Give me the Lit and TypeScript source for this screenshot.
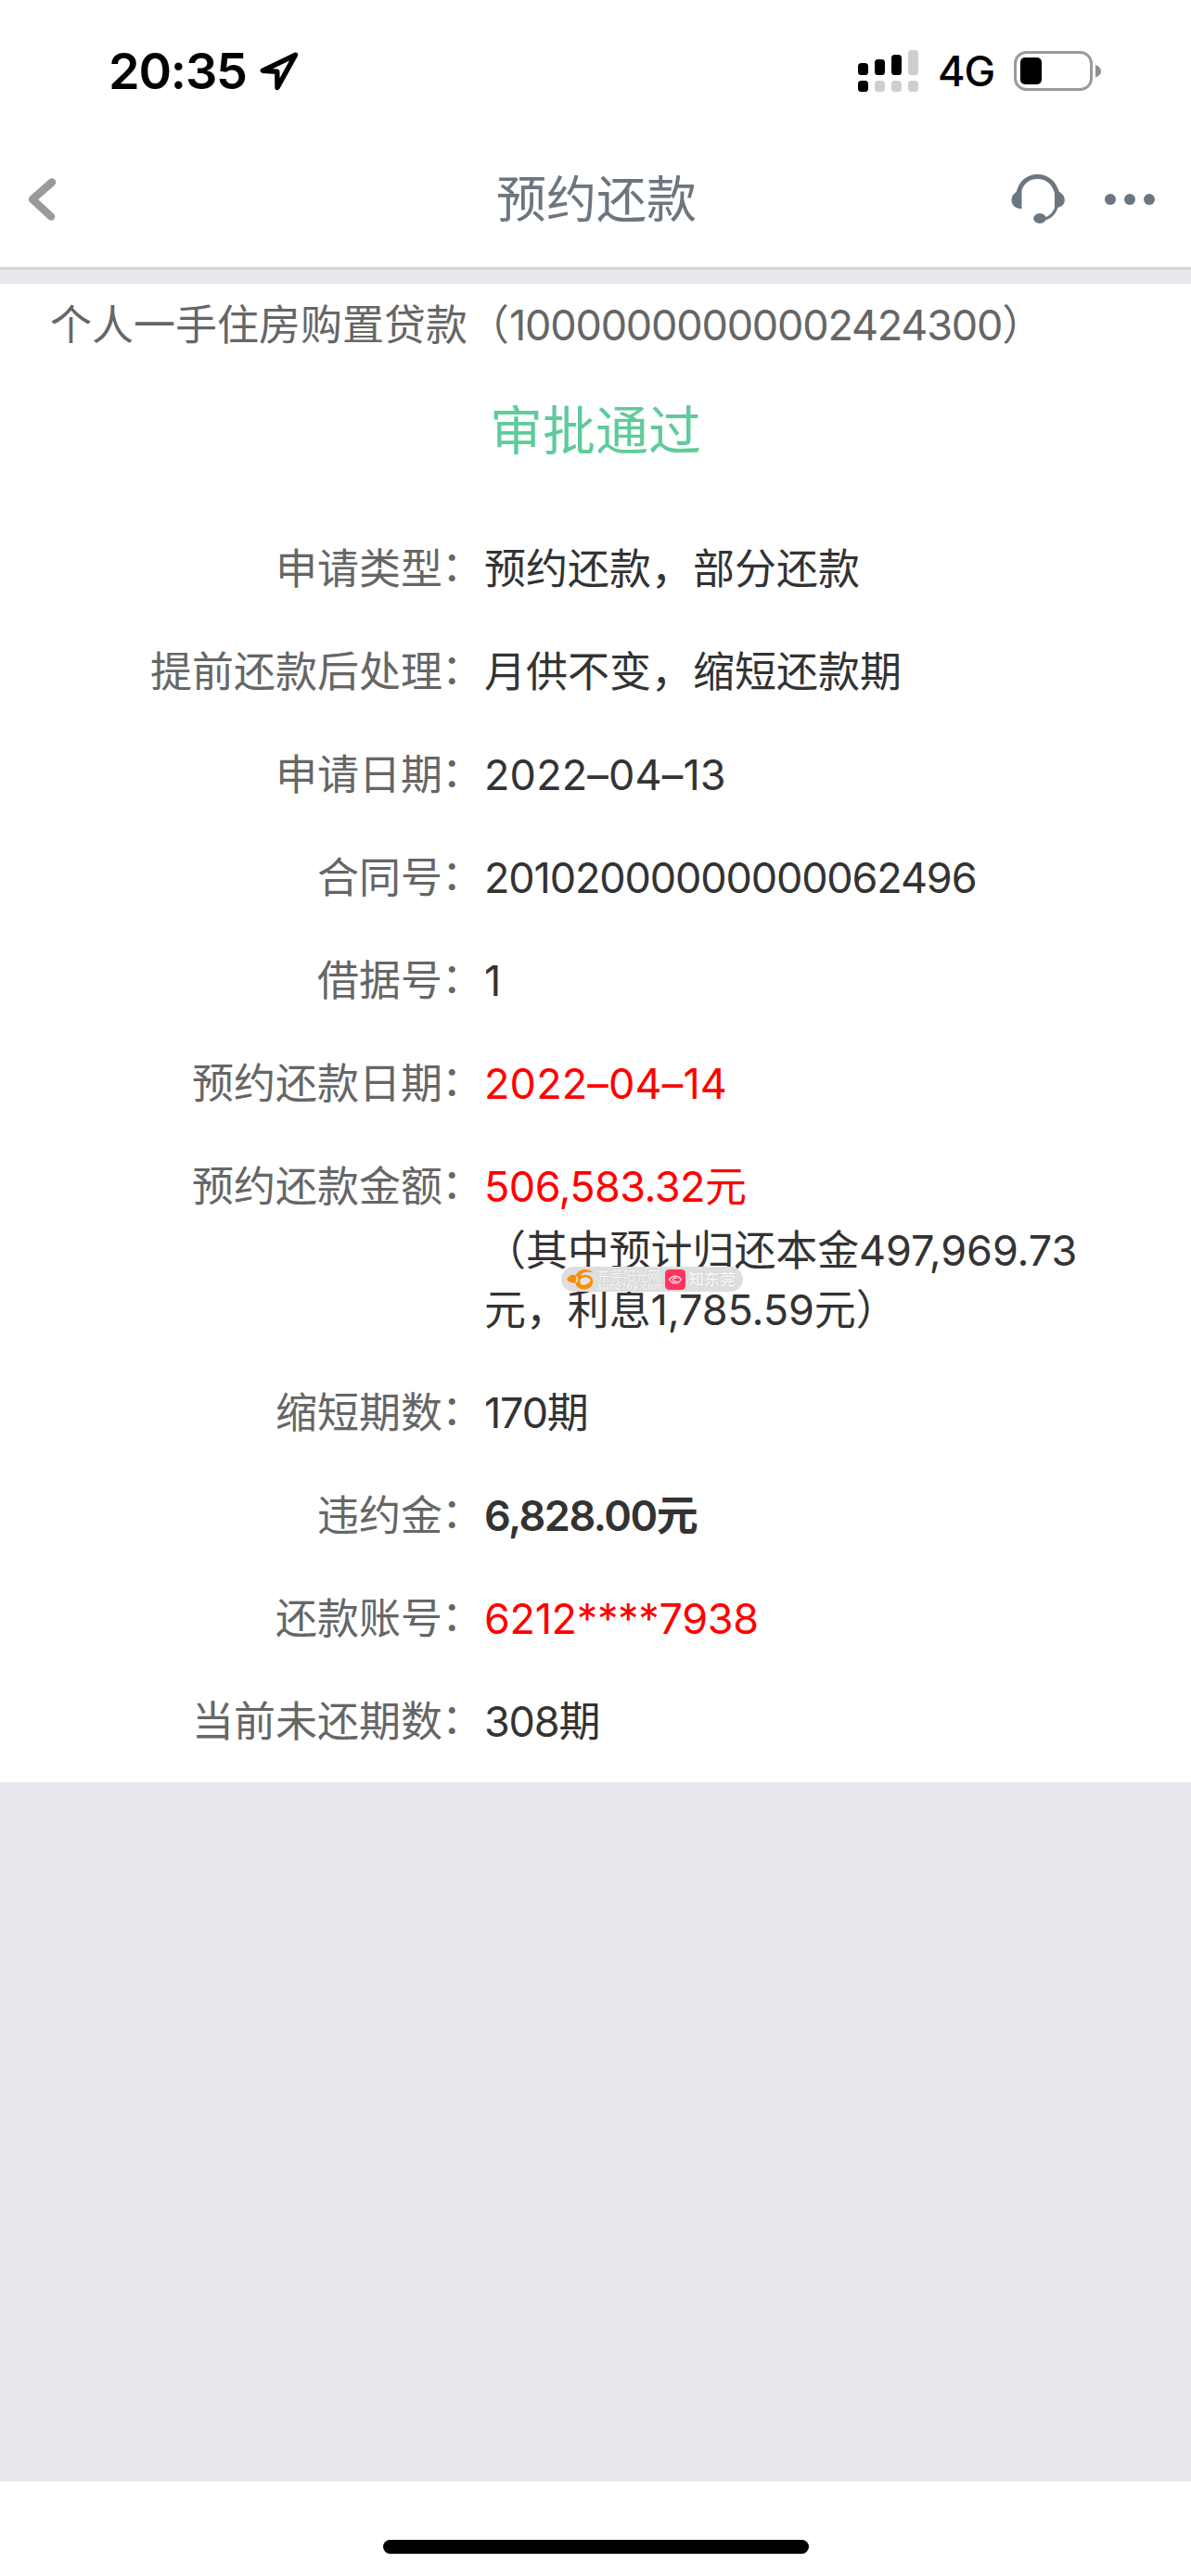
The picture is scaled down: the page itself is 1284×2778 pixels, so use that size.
import { LitElement, html, css, svg } from "lit";
import { customElement, property } from "lit/decorators.js";
import { styleMap } from "lit/directives/style-map.js";

interface Row {
  label: string;
  value: string;
  tracking?: number;
  tone?: "red" | "bold";
  note?: string[];
}

const ROWS: Row[] = [
  { label: "申请类型", value: "预约还款，部分还款" },
  { label: "提前还款后处理", value: "月供不变，缩短还款期" },
  { label: "申请日期", value: "2022–04–13", tracking: 0.15 },
  { label: "合同号", value: "20102000000000062496", tracking: -1.15 },
  { label: "借据号", value: "1" },
  { label: "预约还款日期", value: "2022–04–14", tone: "red", tracking: 0.15 },
  {
    label: "预约还款金额",
    value: "506,583.32元",
    tone: "red",
    tracking: -0.55,
    note: ["（其中预计归还本金497,969.73", "元，利息1,785.59元）"],
  },
  { label: "缩短期数", value: "170期", tracking: -1.2 },
  { label: "违约金", value: "6,828.00元", tone: "bold", tracking: -1.5 },
  { label: "还款账号", value: "6212****7938", tone: "red", tracking: -0.35 },
  { label: "当前未还期数", value: "308期", tracking: -1.2 },
];

@customElement("status-bar")
class StatusBar extends LitElement {
  static styles = css`
    :host {
      display: flex;
      justify-content: space-between;
      align-items: center;
      height: 153px;
      box-sizing: border-box;
      padding: 0 97px 0 117px;
      margin-bottom: 1px;
      color: #000;
    }
    .left,
    .right {
      display: flex;
      align-items: center;
    }
    .time {
      font-size: 54px;
      font-weight: 600;
      line-height: 60px;
      width: 163px;
      white-space: nowrap;
      letter-spacing: -1.2px;
    }
    .net {
      font-size: 45px;
      font-weight: 500;
      line-height: 60px;
      width: 82px;
      padding-left: 21px;
      white-space: nowrap;
      letter-spacing: -1px;
    }
    svg {
      display: block;
      flex: none;
    }
  `;
  render() {
    const bars = [
      [0, 14, 13, true],
      [18, 10, 17, true],
      [36, 5, 22, true],
      [54, 0, 27, false],
    ] as const;
    return html`
      <div class="left">
        <span class="time">20:35</span>
        <svg width="42" height="42" viewBox="0 0 42 42">
          <path d="M38.500 3.200 3.300 20.200 18.800 21.200 19 38.500Z" fill="none" stroke="#000" stroke-width="5.400" stroke-linejoin="round" />
        </svg>
      </div>
      <div class="right">
        <svg width="65" height="45" viewBox="0 0 65 45">
          ${bars.map(
            ([x, y, h, on]) => svg`<rect x=${x} y=${y} width="11" height=${h} rx="3.5" fill=${on ? "#000" : "#cdcfcf"} />
              <rect x=${x} y="33" width="11" height="12" rx="3.5" fill=${x === 0 ? "#000" : "#cdcfcf"} />`
          )}
        </svg>
        <span class="net">4G</span>
        <svg width="94" height="43" viewBox="0 0 94 43">
          <rect x="1.5" y="1.5" width="82" height="40" rx="12" fill="none" stroke="#999b9b" stroke-width="3" />
          <rect x="7" y="7" width="23" height="29" rx="5" fill="#000" />
          <path d="M88 15c4 1.200 6 3.600 6 6.700s-2 5.500-6 6.700Z" fill="#8e9090" />
        </svg>
      </div>
    `;
  }
}

@customElement("nav-bar")
class NavBar extends LitElement {
  @property() heading = "";
  static styles = css`
    :host {
      display: grid;
      grid-template-columns: 1fr auto 1fr;
      align-items: center;
      height: 137px;
      padding: 0 39px 13px 30px;
      box-sizing: border-box;
      border-bottom: 3px solid #d2d6d7;
      color: #6b7680;
    }
    .title {
      font-size: 54px;
      line-height: 70px;
      padding-left: 11px;
      padding-top: 2px;
    }
    .actions {
      display: flex;
      justify-content: flex-end;
      align-items: center;
      gap: 43px;
    }
    svg {
      display: block;
    }
  `;
  render() {
    return html`
      <svg width="31" height="46" viewBox="0 0 31 46">
        <path d="M26 4.500 5 23 25 41.500" fill="none" stroke="#999b9b" stroke-width="8.500" stroke-linecap="round" stroke-linejoin="round" />
      </svg>
      <div class="title">${this.heading}</div>
      <div class="actions">
        <svg width="58" height="54" viewBox="0 0 58 54" fill="currentColor">
          <path d="M8 20C11 8 19 2.500 28.500 2.500S46 8 49.500 20" fill="none" stroke="currentColor" stroke-width="5" />
          <path d="M11.500 17.500V37H9C3.500 36 .5 32.500 .5 28S3 20.500 6.500 18.500Z" />
          <path d="M47 17.500V37C54 35.500 57.800 32.500 57.800 28S55 20.500 51.500 18.500Z" />
          <path d="M49.500 34C47.500 41 43 46 37 48" fill="none" stroke="currentColor" stroke-width="3.200" />
          <ellipse cx="31" cy="47.500" rx="6.800" ry="5.400" />
        </svg>
        <svg width="54" height="12" viewBox="0 0 54 12" fill="currentColor">
          <circle cx="6" cy="6" r="6" />
          <circle cx="27" cy="6" r="6" />
          <circle cx="48" cy="6" r="6" />
        </svg>
      </div>
    `;
  }
}

@customElement("source-badge")
class SourceBadge extends LitElement {
  static styles = css`
    :host {
      display: flex;
      align-items: center;
      width: 196px;
      height: 27px;
      box-sizing: border-box;
      padding-left: 6px;
      border-radius: 14px;
      background: #dedede;
      color: #f8f8f8;
      overflow: hidden;
    }
    svg {
      display: block;
      flex: none;
    }
    .site {
      width: 76px;
      padding-left: 3px;
      box-sizing: border-box;
    }
    .name {
      font-size: 13.600px;
      line-height: 16px;
      white-space: nowrap;
      text-shadow: 0 0 1px #bbb;
    }
    .domain {
      font-size: 9.500px;
      line-height: 8px;
      font-weight: 600;
      letter-spacing: 0.600px;
      text-shadow: 0 0 1px #bbb;
    }
    .app {
      padding-left: 3px;
      font-size: 17px;
      line-height: 20px;
      font-weight: 500;
      white-space: nowrap;
      text-shadow: 0 0 1px #bbb;
    }
  `;
  render() {
    return html`
      <svg width="30" height="23" viewBox="0 0 30 23">
        <path
          d="M0 11.500C3 7 7 6 10 7.500C12 1 21-1.500 29 4.500C22 3 16 4 15 8.500C18 6 25 6.500 27.500 10.500C30 16 26 22.500 19 22.500C13 22.500 9.500 19 9.500 15.500C5 16 1.500 14.500 0 11.500Z"
          fill="#f78f0c"
        />
        <path d="M15 11.500C18 8 23.500 9 25.500 13C24 17 17 19.500 15 16.500C14 15 14 13 15 11.500Z" fill="#e6e4e0" />
        <path d="M10.500 8.500C12 11 11 13.500 10 15" fill="none" stroke="#fff" stroke-width="1.200" />
      </svg>
      <div class="site">
        <div class="name">东莞阳光网</div>
        <div class="domain">sun0769.com</div>
      </div>
      <svg width="22" height="22" viewBox="0 0 22 22">
        <rect width="22" height="22" rx="4.500" fill="#ff3560" />
        <path d="M4.500 11Q11 3 17.500 11Q11 19 4.500 11Z" fill="none" stroke="#fff" stroke-width="1.100" />
        <path d="M12.600 9.600a2.200 2.200 0 1 0 0 2.800" fill="none" stroke="#fff" stroke-width="1.200" />
      </svg>
      <div class="app">知东莞</div>
    `;
  }
}

@customElement("detail-row")
class DetailRow extends LitElement {
  @property({ attribute: false }) row!: Row;
  static styles = css`
    :host {
      display: grid;
      grid-template-columns: 522px 1fr;
      padding: 23px 0 24px;
      font-size: 45px;
      line-height: 64px;
      color: #333;
    }
    .label {
      display: flex;
      justify-content: flex-end;
      color: #666;
    }
    .colon {
      position: relative;
      top: -3px;
      left: -1px;
    }
    .value,
    .line {
      white-space: nowrap;
    }
    .red {
      color: #f00;
    }
    .bold {
      font-weight: 600;
    }
    .note {
      position: relative;
      padding-top: 5px;
    }
    .line {
      display: block;
      letter-spacing: -0.100px;
    }
    source-badge {
      position: absolute;
      left: 83px;
      top: 54px;
    }
  `;
  render() {
    const { label, value, tone, note, tracking } = this.row;
    return html`
      <div class="label">${label}<span class="colon">：</span></div>
      <div>
        <div class="value ${tone ?? ""}" style=${styleMap({ letterSpacing: `${tracking ?? 0}px` })}>${value}</div>
        ${note
          ? html`<div class="note">
              ${note.map((l) => html`<span class="line">${l}</span>`)}
              <source-badge></source-badge>
            </div>`
          : ""}
      </div>
    `;
  }
}

@customElement("app-root")
class AppRoot extends LitElement {
  static styles = css`
    :host {
      display: flex;
      flex-direction: column;
      height: 2778px;
      width: 100%;
      background: #e9e8ee;
      font-family: Inter, "Noto Sans CJK SC", sans-serif;
      font-feature-settings: "calt" 0;
    }
    .top {
      background: #fff;
      margin-bottom: 15px;
    }
    .card {
      background: #fff;
      height: 1616px;
      box-sizing: border-box;
      padding-top: 13px;
    }
    .loan {
      font-size: 45px;
      line-height: 64px;
      padding-left: 54px;
      color: #666;
      white-space: nowrap;
    }
    .account {
      letter-spacing: -1.200px;
    }
    .result {
      font-size: 57px;
      line-height: 80px;
      margin: 42px 0 54px;
      text-align: center;
      color: #5fcb9a;
    }
    .home {
      margin-top: auto;
      height: 102px;
      background: #fff;
      display: flex;
      justify-content: center;
      align-items: flex-start;
    }
    .handle {
      margin-top: 63px;
      width: 459px;
      height: 15px;
      border-radius: 8px;
      background: #000;
    }
  `;
  render() {
    return html`
      <div class="top">
        <status-bar></status-bar>
        <nav-bar heading="预约还款"></nav-bar>
      </div>
      <div class="card">
        <div class="loan">个人一手住房购置贷款（<span class="account">10000000000002424300</span>）</div>
        <div class="result">审批通过</div>
        ${ROWS.map((r) => html`<detail-row .row=${r}></detail-row>`)}
      </div>
      <div class="home"><div class="handle"></div></div>
    `;
  }
}
